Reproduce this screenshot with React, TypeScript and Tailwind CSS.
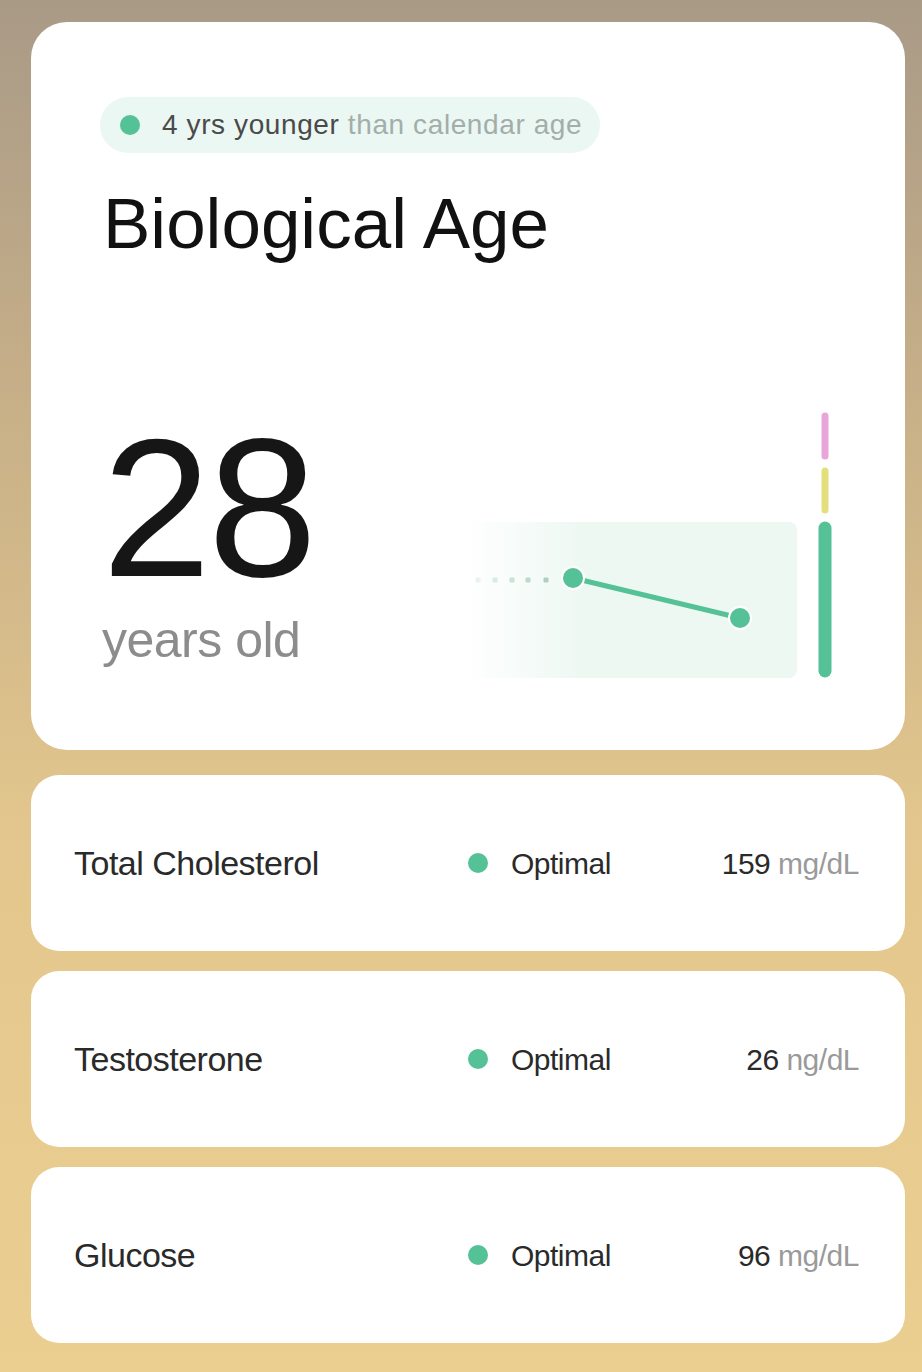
import React from "react";

const font = { fontFamily: '"Liberation Sans", Arial, sans-serif' };

const markers = [
  { name: "Total Cholesterol", value: "159", unit: "mg/dL" },
  { name: "Testosterone", value: "26", unit: "ng/dL" },
  { name: "Glucose", value: "96", unit: "mg/dL" },
];

function AgeChart() {
  const dots = [13, 30, 47, 63, 81];
  return (
    <svg width="370" height="270" viewBox="0 0 370 270">
      <defs>
        <linearGradient id="shade" x1="0" y1="0" x2="1" y2="0">
          <stop offset="0" stopColor="#eef8f3" stopOpacity="0" />
          <stop offset="0.35" stopColor="#eef8f3" stopOpacity="1" />
          <stop offset="1" stopColor="#eef8f3" stopOpacity="1" />
        </linearGradient>
      </defs>
      <rect x="0" y="112" width="332" height="156" rx="8" fill="url(#shade)" />
      {dots.map((x, i) => (
        <rect
          key={x}
          x={x - 2.5}
          y={167.5}
          width="5"
          height="5"
          rx="1"
          fill="#9fc4b4"
          opacity={0.2 + i * 0.15}
        />
      ))}
      <line x1="108" y1="168" x2="275" y2="208" stroke="#55c196" strokeWidth="5" strokeLinecap="round" />
      <circle cx="108" cy="168" r="12" fill="#ffffff" />
      <circle cx="108" cy="168" r="10" fill="#55c196" />
      <circle cx="275" cy="208" r="12" fill="#ffffff" />
      <circle cx="275" cy="208" r="10" fill="#55c196" />
      <line x1="360" y1="6" x2="360" y2="46" stroke="#e9a5d9" strokeWidth="7" strokeLinecap="round" />
      <line x1="360" y1="61" x2="360" y2="100" stroke="#e2df7c" strokeWidth="7" strokeLinecap="round" />
      <line x1="360" y1="118" x2="360" y2="261" stroke="#55c196" strokeWidth="13" strokeLinecap="round" />
    </svg>
  );
}

export default function App() {
  return (
    <div
      className="min-h-[1372px] w-[922px] bg-[linear-gradient(180deg,#a99a87_0%,#c8b088_30%,#e2c68d_60%,#ebcf91_100%)] pl-[31px] pr-[17px] pt-[22px] pb-[30px]"
      style={font}
    >
      {/* Biological age card */}
      <div className="flex h-[728px] flex-col rounded-[36px] bg-white pl-[69px] pr-[70px] pt-[75px] pb-[70px]">
        <div className="flex h-[56px] w-fit items-center gap-[22px] rounded-full bg-[#ebf7f2] pl-[20px] pr-[18px]">
          <span className="h-[20px] w-[20px] rounded-full bg-[#55c196]" />
          <span className="text-[28px] tracking-[0.6px] text-[#4a4a4a]">
            4 yrs younger <span className="text-[#a3aeaa]">than calendar age</span>
          </span>
        </div>
        <h1 className="ml-[3px] mt-[35px] text-[71px] leading-none tracking-[0px] text-[#111111]">
          Biological Age
        </h1>

        <div className="mt-auto flex items-end justify-between">
          <div className="mb-[15px] ml-[2px] flex flex-col">
            <span className="text-[196px] leading-none tracking-[-3px] text-[#161616]">28</span>
            <span className="mt-[8px] text-[50px] leading-none tracking-[-0.5px] text-[#8c8c8c]">
              years old
            </span>
          </div>
          <AgeChart />
        </div>
      </div>

      {/* Marker rows */}
      <div className="mt-[25px] flex flex-col gap-[20px]">
        {markers.map((m) => (
          <div
            key={m.name}
            className="flex h-[176px] items-center rounded-[28px] bg-white pl-[43px] pr-[46px] text-[30px] tracking-[-0.5px]"
          >
            <span className="w-[394px] text-[34px] tracking-[-0.5px] text-[#2a2a2a]">{m.name}</span>
            <span className="h-[20px] w-[20px] rounded-full bg-[#55c196]" />
            <span className="ml-[23px] text-[#2a2a2a]">Optimal</span>
            <span className="ml-auto text-[#2a2a2a]">
              {m.value} <span className="text-[#9a9a9a]">{m.unit}</span>
            </span>
          </div>
        ))}
      </div>
    </div>
  );
}
